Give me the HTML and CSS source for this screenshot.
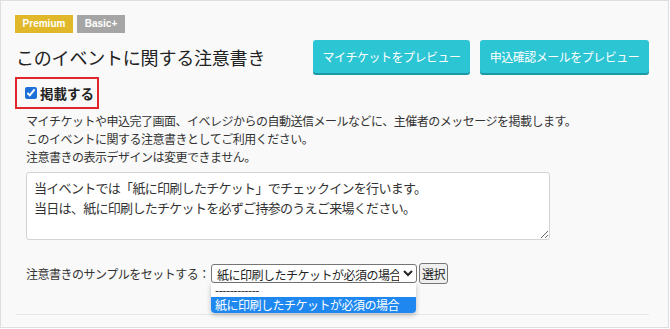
FILE: index.html
```html
<!DOCTYPE html>
<html lang="ja">
<head>
    <meta charset="UTF-8">
    <title>注意書き</title>

    <link rel="stylesheet" href="styles.css">
</head>
<body>
    <div class="panel">
        <div class="plans">
            <span class="plan premium">Premium</span>
            <span class="plan basic">Basic+</span>
        </div>

        <div class="headRow">
            <h2 class="title">このイベントに関する注意書き</h2>
            <div class="previewBtns">
                <button class="previewBtn" type="button">マイチケットをプレビュー</button>
                <button class="previewBtn" type="button">申込確認メールをプレビュー</button>
            </div>
        </div>

        <label class="publish">
            <input type="checkbox" checked>
            <span>掲載する</span>
        </label>

        <p class="desc">
            マイチケットや申込完了画面、イベレジからの自動送信メールなどに、主催者のメッセージを掲載します。<br>
            このイベントに関する注意書きとしてご利用ください。<br>
            注意書きの表示デザインは変更できません。
        </p>

        <textarea class="noteText">当イベントでは「紙に印刷したチケット」でチェックインを行います。
当日は、紙に印刷したチケットを必ずご持参のうえご来場ください。</textarea>

        <div class="sampleRow">
            <label for="sample">注意書きのサンプルをセットする：</label>
            <div class="selectWrap">
                <select id="sample" class="sampleSelect">
                    <option>------------</option>
                    <option selected>紙に印刷したチケットが必須の場合</option>
                </select>
                <!-- open dropdown list -->
                <ul class="dropList">
                    <li>------------</li>
                    <li class="active">紙に印刷したチケットが必須の場合</li>
                </ul>
            </div>
            <button class="pickBtn" type="button">選択</button>
        </div>

        <hr class="endLine">
    </div>
</body>
</html>
```

FILE: styles.css
```css
* {
    box-sizing: border-box;
}

body {
    margin: 0;
    font-family: "Noto Sans CJK JP", "Noto Sans", sans-serif;
    color: #333;
    background: #fff;
}

.panel {
    width: 669px;
    height: 328px;
    border: 1px solid #dedede;
    background: #f9f9f9;
    padding: 14px 19px 0 14px;
}

.plans {
    display: flex;
    gap: 4px;
}

.plan {
    display: inline-block;
    height: 18px;
    line-height: 18px;
    font-family: "Liberation Sans", Arial, sans-serif;
    font-size: 10px;
    font-weight: bold;
    color: #fff;
    text-align: center;
}

.premium {
    background: #e0b82a;
    width: 58px;
}

.basic {
    background: #a5a5a5;
    width: 48px;
}

.headRow {
    display: flex;
    justify-content: space-between;
    align-items: center;
    margin-top: 7px;
}

.title {
    margin: 0 0 0 1px;
    font-size: 18px;
    font-weight: normal;
    color: #222;
    line-height: 24px;
    letter-spacing: -0.2px;
}

.previewBtns {
    display: flex;
    gap: 10px;
}

.previewBtn {
    height: 33px;
    padding: 0;
    border: none;
    border-radius: 3px;
    background: #2bc5d4;
    box-shadow: 0 2px 0 #1c99a6;
    color: #fff;
    font-family: "Noto Sans CJK JP", sans-serif;
    font-size: 12px;
    letter-spacing: -0.5px;
    white-space: nowrap;
}

.previewBtn:first-child {
    width: 157px;
}

.previewBtn:last-child {
    width: 169px;
}

.publish {
    display: inline-flex;
    align-items: center;
    gap: 3px;
    margin-top: 4px;
    width: 84px;
    height: 32px;
    padding-left: 8px;
    border: 2px solid #e0262a;
    font-size: 13.5px;
    font-weight: bold;
    color: #222;
}

.publish input {
    width: 12px;
    height: 12px;
    margin: 0;
    accent-color: #1f6fd8;
}

.desc {
    margin: 3px 0 0 11px;
    font-size: 12px;
    letter-spacing: -0.5px;
    line-height: 18px;
}

.noteText {
    display: block;
    width: 524px;
    height: 68px;
    margin: 6px 0 0 11px;
    padding: 5px 7px;
    border: 1px solid #d4d4d4;
    border-radius: 3px;
    background: #fff;
    color: #333;
    font-family: "Noto Sans CJK JP", sans-serif;
    font-size: 13px;
    letter-spacing: -0.7px;
    line-height: 20px;
    resize: both;
}

.sampleRow {
    display: flex;
    align-items: center;
    margin: 23px 0 0 11px;
    font-size: 12px;
    letter-spacing: -0.5px;
}

.sampleRow label {
    width: 185px;
}

.selectWrap {
    position: relative;
}

.sampleSelect {
    width: 206px;
    height: 19px;
    padding: 0 1px;
    border: 1px solid #767676;
    border-radius: 3px;
    background: #fff;
    color: #222;
    font-family: "Noto Sans CJK JP", sans-serif;
    font-size: 12px;
    letter-spacing: -0.5px;
}

.dropList {
    position: absolute;
    top: 19px;
    left: 0;
    width: 205px;
    margin: 0;
    padding: 0;
    list-style: none;
    background: #fff;
    border-radius: 0 0 4px 4px;
    box-shadow: 0 2px 5px rgba(0, 0, 0, 0.25);
    font-size: 12px;
    overflow: hidden;
}

.dropList li {
    height: 14px;
    line-height: 14px;
    padding: 0 4px;
    color: #222;
    white-space: nowrap;
}

.dropList li.active {
    height: 16px;
    line-height: 16px;
    background: #1e88f0;
    color: #fff;
}

.pickBtn {
    height: 21px;
    margin-left: 2px;
    padding: 0 2px;
    border: 1px solid #767676;
    border-radius: 3px;
    background: #efefef;
    color: #222;
    font-family: "Noto Sans CJK JP", sans-serif;
    font-size: 12px;
    letter-spacing: -0.5px;
}

.endLine {
    margin: 30px 0 0 1px;
    border: none;
    border-top: 1px solid #e6e6e6;
}
```
